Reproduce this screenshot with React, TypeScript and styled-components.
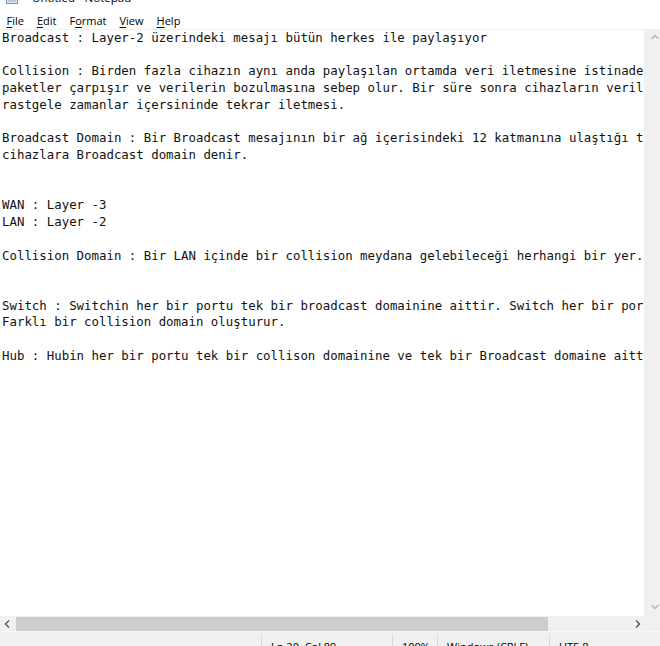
import React from "react";
import styled, { createGlobalStyle } from "styled-components";

const GlobalStyle = createGlobalStyle`
  html, body {
    margin: 0;
    padding: 0;
    width: 660px;
    height: 646px;
    overflow: hidden;
    background: #ffffff;
  }
`;

const Window = styled.div`
  width: 660px;
  height: 654px;
  display: flex;
  flex-direction: column;
  background: #ffffff;
  overflow: hidden;
`;

const TitleBar = styled.div`
  height: 28px;
  margin-top: -17px;
  flex: none;
  display: flex;
  align-items: center;
  padding-left: 6px;
  font-family: "Open Sans", "Noto Sans", sans-serif;
  font-size: 11.5px;
  color: #000;
  background: #ffffff;
`;

const TitleText = styled.span`
  margin-left: 14px;
  white-space: nowrap;
`;

const Controls = styled.div`
  margin-left: auto;
  margin-right: -92px;
  display: flex;
  height: 100%;
`;

const CtrlButton = styled.div`
  width: 46px;
  height: 100%;
  display: flex;
  align-items: center;
  justify-content: center;
`;

const MenuBar = styled.div`
  height: 18px;
  flex: none;
  display: flex;
  align-items: center;
  font-family: "Open Sans", "Noto Sans", sans-serif;
  font-size: 11px;
  color: #000;
  background: #ffffff;
  border-bottom: 1px solid #f0f0f0;
`;

const MenuItem = styled.span`
  padding: 0 6.5px;
  white-space: nowrap;
`;

const Key = styled.span`
  text-decoration: underline;
  text-underline-offset: 2px;
`;

const EditorRow = styled.div`
  flex: 1;
  min-height: 0;
  display: flex;
`;

const TextArea = styled.div`
  flex: 1;
  min-width: 0;
  overflow: hidden;
  padding: 0 0 0 2px;
  font-family: "DejaVu Sans Mono", "Liberation Mono", monospace;
  font-size: 12.4px;
  line-height: 16.74px;
  color: #111;
  white-space: pre;
`;

const Line = styled.div`
  height: 16.74px;
`;

const VScroll = styled.div`
  width: 16px;
  flex: none;
  background: #f0f0f0;
  display: flex;
  flex-direction: column;
  justify-content: space-between;
  align-items: flex-end;
  padding: 3px 0 4px;
`;

const HScrollRow = styled.div`
  height: 15px;
  flex: none;
  display: flex;
  background: #f0f0f0;
`;

const HArrow = styled.div`
  width: 16px;
  flex: none;
  display: flex;
  align-items: center;
  justify-content: center;
`;

const HTrack = styled.div`
  flex: 1;
  display: flex;
  align-items: center;
`;

const HThumb = styled.div`
  height: 14px;
  background: #cdcdcd;
`;

const Corner = styled.div`
  width: 14px;
  flex: none;
  background: #f0f0f0;
`;

const StatusBar = styled.div`
  height: 22px;
  flex: none;
  display: flex;
  background: #f0f0f0;
  border-top: 1px solid #f7f7f7;
  font-family: "Open Sans", "Noto Sans", sans-serif;
  font-size: 11px;
  color: #000;
`;

const StatusSpacer = styled.div`
  flex: 1;
`;

const StatusCell = styled.div<{ $w: number }>`
  width: ${(p) => p.$w}px;
  flex: none;
  box-sizing: border-box;
  border-left: 1px solid #d9d9d9;
  padding: 5px 0 0 9px;
  margin-top: 2px;
  white-space: nowrap;
`;

const lines = [
  "Broadcast : Layer-2 üzerindeki mesajı bütün herkes ile paylaşıyor",
  "",
  "Collision : Birden fazla cihazın aynı anda paylaşılan ortamda veri iletmesine istinaden gönderilen",
  "paketler çarpışır ve verilerin bozulmasına sebep olur. Bir süre sonra cihazların verileri",
  "rastgele zamanlar içersininde tekrar iletmesi.",
  "",
  "Broadcast Domain : Bir Broadcast mesajının bir ağ içerisindeki 12 katmanına ulaştığı tüm",
  "cihazlara Broadcast domain denir.",
  "",
  "",
  "WAN : Layer -3",
  "LAN : Layer -2",
  "",
  "Collision Domain : Bir LAN içinde bir collision meydana gelebileceği herhangi bir yer.",
  "",
  "",
  "Switch : Switchin her bir portu tek bir broadcast domainine aittir. Switch her bir portu",
  "Farklı bir collision domain oluşturur.",
  "",
  "Hub : Hubin her bir portu tek bir collison domainine ve tek bir Broadcast domaine aittir.",
];

const NotepadIcon = () => (
  <svg width="12" height="14" viewBox="0 0 12 14">
    <rect x="0.5" y="0.5" width="11" height="13" fill="#dfe9f5" stroke="#7f95b3" />
    <line x1="2" y1="5" x2="10" y2="5" stroke="#9aaac0" />
    <line x1="2" y1="8" x2="10" y2="8" stroke="#9aaac0" />
    <line x1="2" y1="11" x2="10" y2="11" stroke="#9aaac0" />
  </svg>
);

const Chevron = ({ dir, color }: { dir: "up" | "down" | "left" | "right"; color: string }) => {
  const d: Record<string, string> = {
    up: "M1.5 6 L5 2.5 L8.5 6",
    down: "M1.5 3 L5 6.5 L8.5 3",
    left: "M6 1.5 L2.5 5 L6 8.5",
    right: "M3 1.5 L6.5 5 L3 8.5",
  };
  return (
    <svg width="10" height="10" viewBox="0 0 10 10">
      <path d={d[dir]} fill="none" stroke={color} strokeWidth="1.4" />
    </svg>
  );
};

export default function App() {
  return (
    <>
      <GlobalStyle />
      <Window>
        <TitleBar>
          <NotepadIcon />
          <TitleText>Untitled - Notepad</TitleText>
          <Controls>
            <CtrlButton>
              <svg width="10" height="10" viewBox="0 0 10 10">
                <line x1="0" y1="5.5" x2="10" y2="5.5" stroke="#555" />
              </svg>
            </CtrlButton>
            <CtrlButton>
              <svg width="10" height="10" viewBox="0 0 10 10">
                <rect x="0.5" y="0.5" width="9" height="9" fill="none" stroke="#555" />
              </svg>
            </CtrlButton>
            <CtrlButton>
              <svg width="10" height="10" viewBox="0 0 10 10">
                <path d="M0 0 L10 10 M10 0 L0 10" stroke="#555" />
              </svg>
            </CtrlButton>
          </Controls>
        </TitleBar>
        <MenuBar>
          <MenuItem>
            <Key>F</Key>ile
          </MenuItem>
          <MenuItem>
            <Key>E</Key>dit
          </MenuItem>
          <MenuItem>
            F<Key>o</Key>rmat
          </MenuItem>
          <MenuItem>
            <Key>V</Key>iew
          </MenuItem>
          <MenuItem>
            <Key>H</Key>elp
          </MenuItem>
        </MenuBar>
        <EditorRow>
          <TextArea>
            {lines.map((l, i) => (
              <Line key={i}>{l}</Line>
            ))}
          </TextArea>
          <VScroll>
            <Chevron dir="up" color="#b8b8b8" />
            <Chevron dir="down" color="#b8b8b8" />
          </VScroll>
        </EditorRow>
        <HScrollRow>
          <HArrow>
            <Chevron dir="left" color="#555" />
          </HArrow>
          <HTrack>
            <HThumb style={{ width: 532 }} />
          </HTrack>
          <HArrow>
            <Chevron dir="right" color="#555" />
          </HArrow>
          <Corner />
        </HScrollRow>
        <StatusBar>
          <StatusSpacer />
          <StatusCell $w={131}>Ln 20, Col 89</StatusCell>
          <StatusCell $w={45}>100%</StatusCell>
          <StatusCell $w={112}>Windows (CRLF)</StatusCell>
          <StatusCell $w={111}>UTF-8</StatusCell>
        </StatusBar>
      </Window>
    </>
  );
}
